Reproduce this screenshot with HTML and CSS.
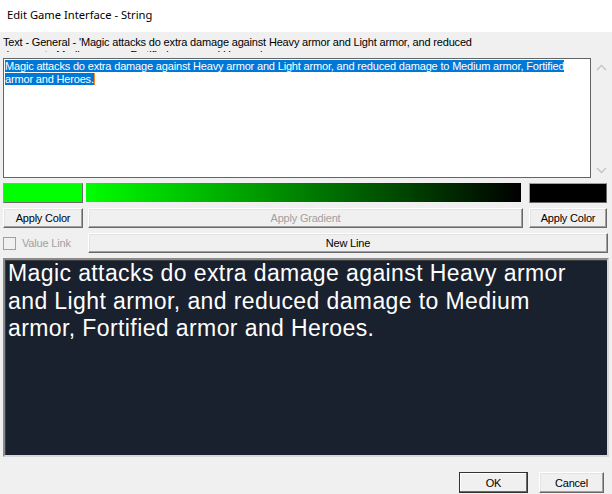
FILE: index.html
```html
<!DOCTYPE html>
<html>
<head>
<meta charset="utf-8">
<link rel="stylesheet" href="styles.css">
</head>
<body>
<div class="window">
  <div class="titlebar">Edit Game Interface - String</div>
  <div class="content">
    <div class="label">Text - General - 'Magic attacks do extra damage against Heavy armor and Light armor, and reduced<br>damage to Medium armor, Fortified armor and Heroes.'</div>
    <div class="editrow">
      <div class="textarea">
        <span class="sel">Magic attacks do extra damage against Heavy armor and Light armor, and reduced damage to Medium armor, Fortified </span><br><span class="sel">armor and Heroes.</span><span class="caret"></span>
      </div>
      <div class="scrollbar">
        <svg class="arrow" width="11" height="7" viewBox="0 0 11 7"><polyline points="1,6 5.5,1.5 10,6" fill="none" stroke="#c4c4c4" stroke-width="1.4"/></svg>
        <svg class="arrow" width="11" height="7" viewBox="0 0 11 7"><polyline points="1,1 5.5,5.5 10,1" fill="none" stroke="#c4c4c4" stroke-width="1.4"/></svg>
      </div>
    </div>
    <div class="row colors">
      <div class="swatch green"></div>
      <div class="gradient"></div>
      <div class="swatch black"></div>
    </div>
    <div class="row">
      <button class="btn small">Apply Color</button>
      <button class="btn wide disabled">Apply Gradient</button>
      <button class="btn small2">Apply Color</button>
    </div>
    <div class="row">
      <div class="check"><span class="box"></span><span class="checklabel">Value Link</span></div>
      <button class="btn newline">New Line</button>
    </div>
    <div class="display">Magic attacks do extra damage against Heavy armor<br>and Light armor, and reduced damage to Medium<br>armor, Fortified armor and Heroes.</div>
    <div class="footer">
      <button class="btn ok">OK</button>
      <button class="btn cancel">Cancel</button>
    </div>
  </div>
</div>
</body>
</html>
```
FILE: styles.css
```css
html, body {
  margin: 0;
  padding: 0;
  background: #f0f0f0;
}
.window {
  width: 612px;
  height: 494px;
  overflow: hidden;
  font-family: "Liberation Sans", Arial, sans-serif;
  font-size: 11px;
  letter-spacing: -0.17px;
  color: #000;
}
.titlebar {
  height: 32px;
  background: #fff;
  font-family: "Noto Sans", "Open Sans", sans-serif;
  font-size: 11.2px;
  letter-spacing: 0;
  line-height: 30px;
  padding-left: 7px;
  box-sizing: border-box;
}
.content {
  background: #f0f0f0;
  padding: 0 0 0 3px;
}
.label {
  margin-top: 3px;
  height: 17px;
  line-height: 13px;
  overflow: hidden;
  white-space: nowrap;
  padding-top: 1px;
  box-sizing: border-box;
}
.editrow {
  display: flex;
  margin-top: 6px;
  height: 120px;
}
.textarea {
  width: 588px;
  height: 120px;
  box-sizing: border-box;
  background: #fff;
  border: 1px solid #646464;
  padding: 1px 0 0 1px;
  line-height: 13px;
  white-space: nowrap;
}
.sel {
  background: #0078d7;
  color: #fff;
}
.caret {
  display: inline-block;
  width: 1px;
  height: 12px;
  background: #ff8728;
  vertical-align: -2px;
}
.scrollbar {
  width: 21px;
  display: flex;
  flex-direction: column;
  justify-content: space-between;
  align-items: center;
  padding: 6px 0 4px 0;
  box-sizing: border-box;
}
.arrow {
  display: block;
}
.row {
  display: flex;
  height: 20px;
  margin-top: 5px;
}
.swatch {
  height: 20px;
  box-sizing: border-box;
  border-top: 1px solid #a0a0a0;
  border-left: 1px solid #a0a0a0;
  border-bottom: 1px solid #696969;
  border-right: 1px solid #696969;
}
.green {
  width: 80px;
  background: #00ff00;
}
.gradient {
  width: 435px;
  height: 19px;
  margin-left: 3px;
  background: linear-gradient(to right, #00ff00, #000000);
}
.black {
  width: 78px;
  margin-left: 8px;
  background: #000;
}
.btn {
  font-family: "Liberation Sans", Arial, sans-serif;
  font-size: 11px;
  letter-spacing: -0.2px;
  color: #000;
  background: #f0f0f0;
  height: 20px;
  box-sizing: border-box;
  border-top: 1px solid #fff;
  border-left: 1px solid #fff;
  border-right: 1px solid #696969;
  border-bottom: 1px solid #696969;
  box-shadow: inset -1px -1px 0 #a0a0a0, inset 1px 1px 0 #e3e3e3;
  padding: 0;
  margin: 0;
  text-align: center;
}
.disabled {
  color: #a0a0a0;
}
.small {
  width: 80px;
}
.wide {
  width: 435px;
  margin-left: 5px;
}
.small2 {
  width: 78px;
  margin-left: 6px;
}
.check {
  width: 85px;
  display: flex;
  align-items: center;
  gap: 6px;
  color: #a0a0a0;
}
.box {
  width: 13px;
  height: 13px;
  box-sizing: border-box;
  border: 1px solid #a0a0a0;
  background: #f0f0f0;
  margin-top: 1px;
}
.newline {
  width: 520px;
}
.display {
  margin-top: 5px;
  width: 606px;
  height: 199px;
  box-sizing: border-box;
  background: #19212f;
  border-top: 2px solid #8a8a8a;
  border-left: 2px solid #8a8a8a;
  border-right: 2px solid #d8d8d8;
  border-bottom: 2px solid #d8d8d8;
  box-shadow: inset 1px 1px 0 #3c3c3c;
  color: #fff;
  font-family: "Liberation Sans", Arial, sans-serif;
  font-size: 23px;
  letter-spacing: 0.4px;
  line-height: 27.5px;
  padding: 0 0 0 3px;
  white-space: nowrap;
}
.footer {
  display: flex;
  margin-top: 15px;
  padding-left: 456px;
}
.ok {
  width: 69px;
  height: 21px;
  border: 1px solid #333;
  box-shadow: inset -1px -1px 0 #696969, inset 1px 1px 0 #fff;
}
.cancel {
  width: 65px;
  height: 21px;
  margin-left: 11px;
}
```
